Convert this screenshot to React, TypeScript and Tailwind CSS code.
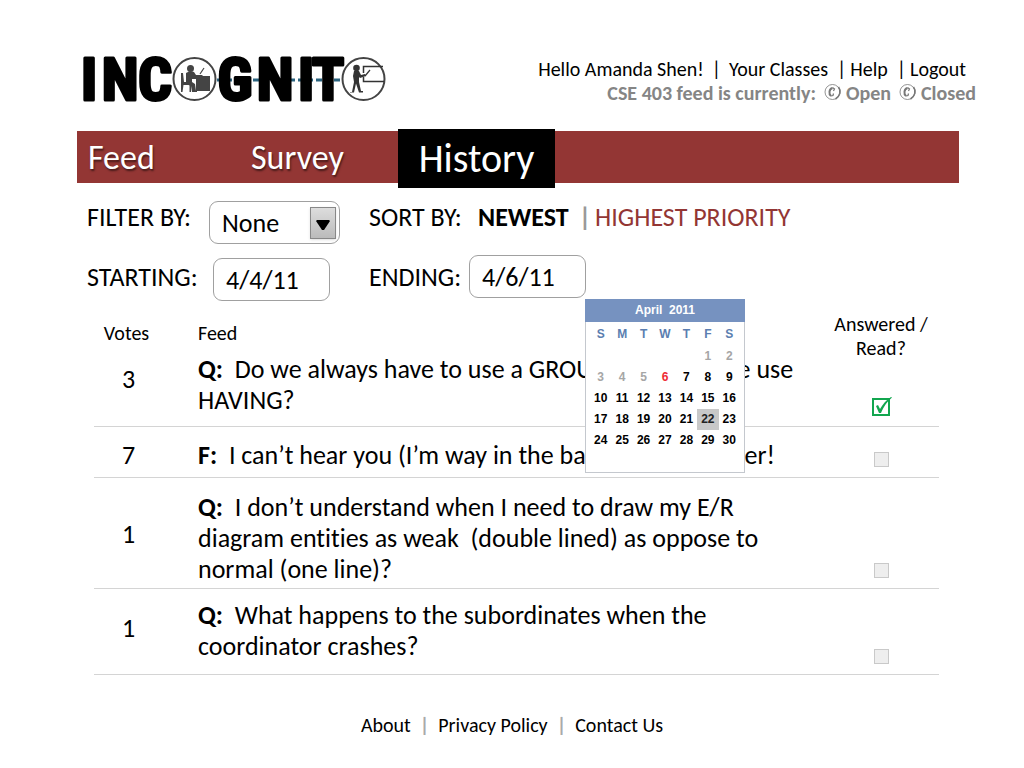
import React from "react";

type Item = {
  votes: number;
  kind: string;
  lines: string[];
  done: boolean;
  height: string;
  votesPad: string;
  feedPad: string;
};

const items: Item[] = [
  {
    votes: 3,
    kind: "Q:",
    lines: ["Do we always have to use a GROUP BY before we use", "HAVING?"],
    done: true,
    height: "h-[72px]",
    votesPad: "pb-[22px]",
    feedPad: "pb-[10px]",
  },
  {
    votes: 7,
    kind: "F:",
    lines: ["I can’t hear you (I’m way in the back). Speak louder!"],
    done: false,
    height: "h-[51px]",
    votesPad: "pt-[6px]",
    feedPad: "pt-[6px]",
  },
  {
    votes: 1,
    kind: "Q:",
    lines: [
      "I don’t understand when I need to draw my E/R",
      "diagram entities as weak\u00a0 (double lined) as oppose to",
      "normal (one line)?",
    ],
    done: false,
    height: "h-[111px]",
    votesPad: "pt-[2px]",
    feedPad: "pt-[10px]",
  },
  {
    votes: 1,
    kind: "Q:",
    lines: ["What happens to the subordinates when the", "coordinator crashes?"],
    done: false,
    height: "h-[86px]",
    votesPad: "pb-[6px]",
    feedPad: "pb-[2px]",
  },
];

const weeks: (number | null)[][] = [
  [null, null, null, null, null, 1, 2],
  [3, 4, 5, 6, 7, 8, 9],
  [10, 11, 12, 13, 14, 15, 16],
  [17, 18, 19, 20, 21, 22, 23],
  [24, 25, 26, 27, 28, 29, 30],
];

function dayClass(day: number) {
  if (day < 6) return "text-[#a6a6a6]";
  if (day === 6) return "text-[#ee2b33]";
  if (day === 22) return "bg-[#c8c8c8] text-[#222]";
  return "text-black";
}

function Logo() {
  return (
    <svg
      viewBox="0 0 310 56"
      className="h-14 w-[310px] shrink-0 overflow-visible"
      role="img"
      aria-label="Incognito"
    >
      <path d="M140 29H265" stroke="#2b6480" strokeWidth="3" strokeDasharray="6 3" />
      <g
        fontFamily="'Roboto Condensed', 'Open Sans Condensed', Carlito, sans-serif"
        fontWeight="700"
        fontSize="60"
        textAnchor="middle"
        fill="#000"
        stroke="#000"
        strokeWidth="3"
        strokeLinejoin="round"
      >
        <text x="12" y="49">I</text>
        <text x="43" y="49">N</text>
        <text x="78" y="49">C</text>
        <text x="158" y="49">G</text>
        <text x="198" y="49">N</text>
        <text x="229" y="49">I</text>
        <text x="251" y="49">T</text>
      </g>
      <g stroke="#444" strokeWidth="2">
        <circle cx="117.500" cy="28" r="21" fill="#fff" />
        <circle cx="286.500" cy="28" r="21" fill="#fff" />
      </g>
      <g fill="#444">
        <circle cx="113.500" cy="17.500" r="3.500" />
        <path d="M109 22l4-2 4 1 2 3h6l1 1h7v15h-14V28h-4v3l3 2 1 7h1v1h-5l-1-6-5-2z" />
        <path d="M104 22h2l1 9h8v2h-1v8h-1.500v-7h-6l-1 7H104z" />
        <path d="M123 23l4-6" stroke="#444" strokeWidth="1.200" />
      </g>
      <g fill="#333">
        <circle cx="279.500" cy="17" r="3.300" />
        <path d="M277 20h5l2 4 4-1 1 2-6 2-1-1v5l2 9h2v1.500h-4l-3-9-2 9h-4V41h2l2-10-1-6z" />
        <path d="M306 15.500h-19.500V22M286.500 26v4.500H307" fill="none" stroke="#333" strokeWidth="1.500" />
        <path d="M288 25l5-6" stroke="#333" strokeWidth="1.200" />
      </g>
    </svg>
  );
}

function StatusOption({ label }: { label: string }) {
  return (
    <label className="flex items-center gap-1">
      <span className="relative flex h-[18px] w-[18px] items-center">
        <input
          type="radio"
          name="feed-status"
          className="absolute inset-0 m-0 appearance-none rounded-full"
        />
        <svg viewBox="0 0 18 18" className="h-[18px] w-[18px]" fill="none" stroke="#777" aria-hidden="true">
          <circle cx="8.500" cy="8" r="7.500" strokeWidth="0.800" />
          <path d="M14.500 3c3 4 1.500 9-3 12" strokeWidth="1.600" />
          <path d="M8.500 4C5 5 4.500 10 7 12" strokeWidth="2" />
          <path d="M8.500 3.500l2 1.500-1 2M7 12l2-.5.5-2" strokeWidth="1.200" />
        </svg>
      </span>
      {label}
    </label>
  );
}

function Calendar() {
  return (
    <div className="absolute left-full top-full z-10 mt-px -ml-px h-[174px] w-40 bg-white font-['Liberation_Sans',sans-serif] text-[12px] leading-[21px] font-bold">
      <div className="flex h-full flex-col border border-t-0 border-[#c4c8ce]">
        <div className="-mx-px h-[23px] bg-[#7692c0] text-center leading-[23px] text-white">
          April&nbsp; 2011
        </div>
        <div className="px-1">
          <table aria-label="April 2011" className="w-full table-fixed border-collapse text-center">
            <thead>
              <tr className="h-6 text-[#5b7eb0]">
                {["S", "M", "T", "W", "T", "F", "S"].map((d, i) => (
                  <th key={i} className="p-0">
                    {d}
                  </th>
                ))}
              </tr>
            </thead>
            <tbody>
              {weeks.map((week, i) => (
                <tr key={i} className="h-[21px]">
                  {week.map((day, j) => (
                    <td key={j} className="p-0">
                      {day && (
                        <button type="button" className={`block h-[21px] w-full ${dayClass(day)}`}>
                          {day}
                        </button>
                      )}
                    </td>
                  ))}
                </tr>
              ))}
            </tbody>
          </table>
        </div>
      </div>
    </div>
  );
}

function ReadBox({ done, label }: { done: boolean; label: string }) {
  return (
    <span className="relative inline-flex">
      <input
        type="checkbox"
        defaultChecked={done}
        aria-label={label}
        className="peer h-[15px] w-[15px] appearance-none border border-[#c9c9c9] bg-[#eee] checked:h-[18px] checked:w-[18px] checked:border-2 checked:border-[#12a64f] checked:bg-white"
      />
      <svg
        viewBox="0 0 20 20"
        className="pointer-events-none absolute bottom-0 left-0 hidden h-5 w-5 peer-checked:block"
        aria-hidden="true"
      >
        <path d="M4 10l2-1 2 4c3-5 6-9 11-12l1 .5C15 6 12 10 9 17H7z" fill="#12a64f" />
      </svg>
    </span>
  );
}

const field = "h-[43px] rounded-[9px] border border-[#a0a0a0] bg-white pl-3 text-[26px] text-black";

export default function App() {
  return (
    <div className="min-h-screen bg-white pt-[51px] pb-6 font-[Carlito,Lato,sans-serif] text-black [font-variant-ligatures:none]">
      <header className="flex items-start justify-between pr-12 pl-[77px]">
        <Logo />
        <div className="flex flex-col items-end pt-[6px] text-[20px] leading-6">
          <nav aria-label="Account" className="flex gap-1 pr-[10px]">
            <span>Hello Amanda Shen!</span>
            <span className="px-1">|</span>
            <a href="#classes">Your Classes</a>
            <span className="pl-[5px]">|</span>
            <a href="#help">Help</a>
            <span className="pl-[5px]">|</span>
            <a href="#logout">Logout</a>
          </nav>
          <div className="flex gap-2 font-bold text-[#858585]">
            <span>CSE 403 feed is currently:</span>
            <StatusOption label="Open" />
            <StatusOption label="Closed" />
          </div>
        </div>
      </header>

      <div className="pr-[65px] pl-[77px]">
        <nav
          aria-label="Main"
          className="mt-6 flex h-[52px] items-center bg-[#933634] text-[34px] text-white"
        >
          <a href="#feed" className="w-[163px] pl-[11px] [text-shadow:1px_2px_2px_#0008]">
            Feed
          </a>
          <a href="#survey" className="w-[158px] pl-[11px] [text-shadow:1px_2px_2px_#0008]">
            Survey
          </a>
          <a
            href="#history"
            aria-current="page"
            className="-mt-[2px] flex h-[59px] w-[157px] items-center justify-center self-start bg-black text-[40px]"
          >
            History
          </a>
        </nav>

        <div className="mt-[18px] flex pl-[10px] text-[26px] leading-8">
          <div className="flex w-[282px] flex-col gap-[14px]">
            <div className="flex items-start">
              <label htmlFor="filter" className="w-[122px]">
                FILTER BY:
              </label>
              <span className="relative">
                <select id="filter" className={`w-[131px] appearance-none ${field}`}>
                  <option>None</option>
                  <option>Answered</option>
                </select>
                <span className="pointer-events-none absolute top-[6px] right-1 flex h-8 w-[26px] items-center justify-center border border-[#888] bg-linear-to-b from-[#ddd] to-[#bbb] shadow">
                  <svg viewBox="0 0 14 10" className="mt-1 h-[10px] w-[14px]" aria-hidden="true">
                    <path d="M1 0h12l1 1-6 9H6L0 1z" />
                  </svg>
                </span>
              </span>
            </div>
            <div className="flex items-start">
              <label htmlFor="starting" className="w-[126px] leading-[38px]">
                STARTING:
              </label>
              <input id="starting" defaultValue="4/4/11" className={`w-[117px] ${field}`} />
            </div>
          </div>
          <div className="flex flex-col gap-[11px]">
            <div className="flex h-[43px] items-start">
              <span className="w-[109px]">SORT BY:</span>
              <button type="button" className="font-bold">
                NEWEST
              </button>
              <span className="pr-1 pl-[10px] font-bold text-[#999]">|</span>
              <button type="button" className="text-[#933634]">
                HIGHEST PRIORITY
              </button>
            </div>
            <div className="flex items-center">
              <label htmlFor="ending" className="w-[100px]">
                ENDING:
              </label>
              <div className="relative flex">
                <input id="ending" defaultValue="4/6/11" className={`w-[117px] ${field}`} />
                <Calendar />
              </div>
            </div>
          </div>
        </div>

        <div className="mt-[11px] pr-5 pl-[17px]">
          <table className="w-full table-fixed border-collapse text-[26px] leading-[31px]">
            <thead>
              <tr className="h-[42px] text-[20px] leading-6">
                <th className="w-[69px] p-0 pr-1 font-normal">Votes</th>
                <th className="p-0 pl-[35px] text-left font-normal">Feed</th>
                <th className="w-[116px] p-0 font-normal">
                  <div className="h-[42px]">
                    Answered /<br />
                    Read?
                  </div>
                </th>
              </tr>
            </thead>
            <tbody>
              {items.map((item, i) => (
                <tr key={i} className={`border-b border-[#d4d4d4] ${item.height}`}>
                  <td className={`p-0 text-center ${item.votesPad}`}>{item.votes}</td>
                  <td className={`p-0 pl-[35px] whitespace-nowrap ${item.feedPad}`}>
                    {item.lines.map((line, j) => (
                      <div key={j}>
                        {j === 0 && <b>{item.kind}&nbsp; </b>}
                        {line}
                      </div>
                    ))}
                  </td>
                  <td className="p-0 pb-[6px] text-center align-bottom leading-none">
                    <ReadBox done={item.done} label={`Answered / Read: item ${i + 1}`} />
                  </td>
                </tr>
              ))}
            </tbody>
          </table>
        </div>
      </div>

      <footer className="mt-[34px] flex justify-center gap-[9px] text-[20px] leading-8">
        <a href="#about">About</a>
        <span className="font-bold text-[#aaa]">|</span>
        <a href="#privacy">Privacy Policy</a>
        <span className="font-bold text-[#aaa]">|</span>
        <a href="#contact">Contact Us</a>
      </footer>
    </div>
  );
}
